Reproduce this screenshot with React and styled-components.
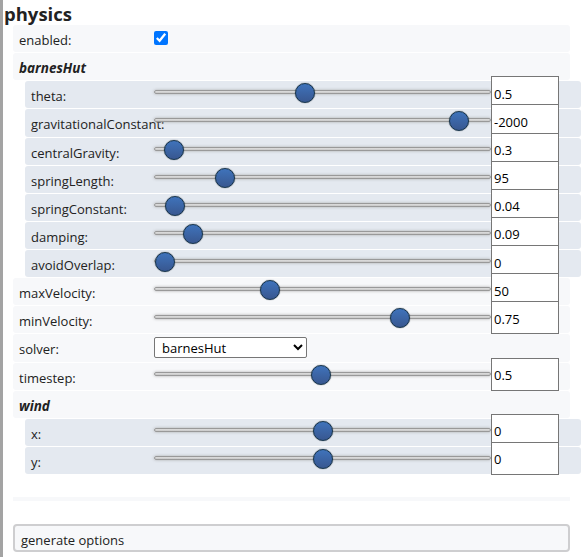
import React from 'react';
import styled, { createGlobalStyle, css } from 'styled-components';

const GlobalStyle = createGlobalStyle`
  html, body {
    margin: 0;
    padding: 0;
    background: #ffffff;
  }
  body {
    font-family: "Open Sans", "Noto Sans", Arial, sans-serif;
    color: #222222;
  }
`;

const Page = styled.div`
  min-height: 100vh;
  box-sizing: border-box;
  border-left: 3px solid #a3a3a3;
  padding-bottom: 5px;
`;

const Header = styled.div`
  box-sizing: border-box;
  height: 25px;
  padding: 2px 0 0 1px;
  line-height: 23px;
  font-size: 18.5px;
  font-weight: bold;
  color: #222222;
`;

const List = styled.div`
  display: flex;
  flex-direction: column;
`;

const Row = styled.div`
  /* each row is its own layer so later rows cover the inputs that hang down */
  z-index: 0;
  display: flex;
  align-items: flex-start;
  box-sizing: border-box;
  height: 27.125px;
  margin-bottom: 1px;
  padding-left: 6px;
  border-radius: 3px;
  font-size: 13px;
  line-height: 27px;
  background: #f7f8fa;
  margin-left: 10px;
  width: 557px;
  ${props =>
    props.level === 3 &&
    css`
      background: #e4e9f0;
      margin-left: 22px;
      width: 556px;
    `}
`;

const Label = styled.div`
  flex: none;
  width: ${props => (props.level === 3 ? 123 : 135)}px;
  padding-top: 2px;
  white-space: nowrap;
  color: #222222;
`;

const GroupTitle = styled.div`
  padding-top: 2px;
  font-weight: bold;
  font-style: italic;
  font-size: 13.5px;
`;

const Check = styled.input`
  margin: 6px 0 0 0;
  width: 14px;
  height: 14px;
`;

const Range = styled.input`
  -webkit-appearance: none;
  appearance: none;
  flex: none;
  width: 337px;
  height: 22px;
  margin: 0;
  padding: 0;
  background: transparent;
  border: 0;

  &::-webkit-slider-runnable-track {
    height: 4px;
    border: 1px solid #999999;
    border-radius: 3px;
    background: linear-gradient(to bottom, #dedede 0%, #c8c8c8 99%);
    box-shadow: #aaaaaa 0 0 3px 0;
  }

  &::-webkit-slider-thumb {
    -webkit-appearance: none;
    appearance: none;
    box-sizing: border-box;
    width: 20px;
    height: 20px;
    margin-top: -8px;
    border: 1px solid #14334b;
    border-radius: 50%;
    background: linear-gradient(to bottom, #3f73bb 0%, #385790 100%);
    box-shadow: #111927 0 0 1px 0;
  }

  &:focus {
    outline: none;
  }
`;

const NumberBox = styled.input`
  flex: none;
  box-sizing: border-box;
  width: 68px;
  height: 33px;
  margin: -5px 0 0 0;
  padding: 2px 2px 0 2px;
  border: 1px solid #767676;
  border-radius: 0;
  background: #ffffff;
  font-family: "Open Sans", "Noto Sans", Arial, sans-serif;
  font-size: 13px;
  color: #000000;
  outline: none;
`;

const Select = styled.select`
  flex: none;
  box-sizing: border-box;
  width: 153px;
  height: 21px;
  margin-top: 3px;
  padding: 0 0 0 3px;
  border: 1px solid #767676;
  border-radius: 2px;
  background: #ffffff;
  font-family: "Open Sans", "Noto Sans", Arial, sans-serif;
  font-size: 13px;
  color: #000000;
`;

const Separator = styled.div`
  height: 4px;
  width: 557px;
  margin: 22px 0 0 10px;
  background: #f7f8fa;
`;

const Button = styled.div`
  box-sizing: border-box;
  width: 557px;
  height: 28px;
  margin: 23px 0 0 10px;
  padding: 3px 0 0 6px;
  border: 2px solid #ceced0;
  border-radius: 4px;
  background: #f7f8fa;
  font-size: 13px;
  line-height: 23px;
  color: #222222;
  cursor: pointer;
`;

const barnesHut = [
  { name: 'theta', value: 0.5, min: 0.1, max: 1, step: 0.05 },
  { name: 'gravitationalConstant', value: -2000, min: -30000, max: 0, step: 50 },
  { name: 'centralGravity', value: 0.3, min: 0, max: 10, step: 0.05 },
  { name: 'springLength', value: 95, min: 0, max: 500, step: 5 },
  { name: 'springConstant', value: 0.04, min: 0, max: 1.2, step: 0.005 },
  { name: 'damping', value: 0.09, min: 0, max: 1, step: 0.01 },
  { name: 'avoidOverlap', value: 0, min: 0, max: 1, step: 0.01 },
];

const velocity = [
  { name: 'maxVelocity', value: 50, min: 0, max: 150, step: 1 },
  { name: 'minVelocity', value: 0.75, min: 0.01, max: 1, step: 0.01 },
];

const wind = [
  { name: 'x', value: 0, min: -10, max: 10, step: 0.1 },
  { name: 'y', value: 0, min: -10, max: 10, step: 0.1 },
];

function SliderRow({ level, name, value, min, max, step }) {
  return (
    <Row level={level}>
      <Label level={level}>{name}:</Label>
      <Range type="range" min={min} max={max} step={step} defaultValue={value} />
      <NumberBox type="text" defaultValue={value} />
    </Row>
  );
}

export default function App() {
  return (
    <>
      <GlobalStyle />
      <Page>
        <Header>physics</Header>
        <List>
          <Row level={2}>
            <Label level={2}>enabled:</Label>
            <Check type="checkbox" defaultChecked />
          </Row>
          <Row level={2}>
            <GroupTitle>barnesHut</GroupTitle>
          </Row>
          {barnesHut.map(item => (
            <SliderRow key={item.name} level={3} {...item} />
          ))}
          {velocity.map(item => (
            <SliderRow key={item.name} level={2} {...item} />
          ))}
          <Row level={2}>
            <Label level={2}>solver:</Label>
            <Select defaultValue="barnesHut">
              <option value="barnesHut">barnesHut</option>
              <option value="forceAtlas2Based">forceAtlas2Based</option>
              <option value="repulsion">repulsion</option>
              <option value="hierarchicalRepulsion">hierarchicalRepulsion</option>
            </Select>
          </Row>
          <SliderRow level={2} name="timestep" value={0.5} min={0.01} max={1} step={0.01} />
          <Row level={2}>
            <GroupTitle>wind</GroupTitle>
          </Row>
          {wind.map(item => (
            <SliderRow key={item.name} level={3} {...item} />
          ))}
        </List>
        <Separator />
        <Button>generate options</Button>
      </Page>
    </>
  );
}
